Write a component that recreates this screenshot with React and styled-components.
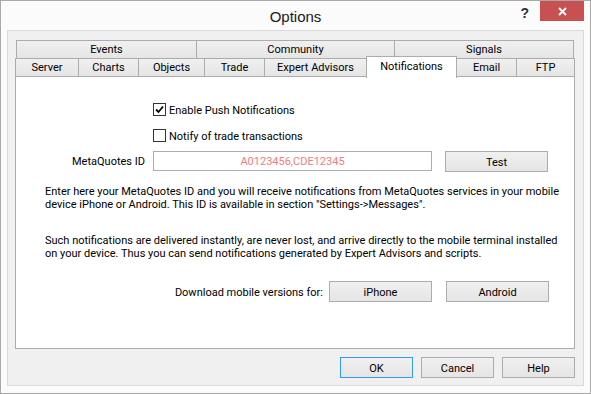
import React from 'react';
import styled, { createGlobalStyle } from 'styled-components';

const FONT = 'Roboto, "Liberation Sans", Arial, sans-serif';
const TITLE_FONT = '"Liberation Sans", Arial, sans-serif';

const GlobalStyle = createGlobalStyle`
  html, body {
    margin: 0;
    padding: 0;
    background: #ffffff;
  }
  * {
    box-sizing: border-box;
  }
`;

const Window = styled.div`
  width: 591px;
  height: 394px;
  border: 1px solid #a9a9a9;
  background: #fbfbfb;
  font-family: ${FONT};
  font-size: 11px;
  color: #000;
  display: flex;
  flex-direction: column;
`;

const TitleBar = styled.div`
  height: 29px;
  display: grid;
  grid-template-columns: 1fr auto 1fr;
  align-items: start;
`;

const Title = styled.div`
  grid-column: 2;
  font-family: ${TITLE_FONT};
  font-size: 15px;
  line-height: 15px;
  padding-top: 8px;
  color: #1a1a1a;
`;

const Controls = styled.div`
  grid-column: 3;
  display: flex;
  justify-content: flex-end;
  align-items: flex-start;
  padding-right: 6px;
`;

const HelpGlyph = styled.div`
  font-family: ${TITLE_FONT};
  font-size: 14px;
  font-weight: bold;
  line-height: 14px;
  padding-top: 5px;
  color: #333;
  margin-right: 11px;
`;

const CloseButton = styled.div`
  width: 44px;
  height: 20px;
  background: #c75050;
  display: flex;
  align-items: center;
  justify-content: center;
`;

const Client = styled.div`
  flex: 1;
  margin: 0 6px 7px 6px;
  border: 1px solid #dadada;
  background: #f0f0f0;
  padding: 9px 8px 7px 7px;
  display: flex;
  flex-direction: column;
`;

const TabRow = styled.div`
  display: flex;
  padding-left: ${(p) => p.$indent || 0}px;
  margin-top: ${(p) => (p.$overlap ? -1 : 0)}px;
  height: 19px;
  align-items: flex-start;
`;

const Tab = styled.div`
  width: ${(p) => p.$w}px;
  height: 19px;
  margin-left: -1px;
  padding-top: 1px;
  border: 1px solid #acacac;
  background: linear-gradient(#f0f0f0, #e5e5e5);
  display: flex;
  align-items: center;
  justify-content: center;
  line-height: 14px;
  &:first-child {
    margin-left: 0;
  }
`;

const ActiveTab = styled(Tab)`
  position: relative;
  z-index: 1;
  height: 22px;
  margin-top: -2px;
  border-bottom: none;
  background: #ffffff;
  align-items: flex-start;
  padding-top: 3px;
`;

const Panel = styled.div`
  margin-top: -1px;
  height: 273px;
  width: 560px;
  border: 1px solid #acacac;
  background: #ffffff;
  display: flex;
  flex-direction: column;
  padding-top: 26px;
`;

const CheckRow = styled.label`
  display: flex;
  align-items: center;
  gap: 3px;
  height: 13px;
  padding-left: 137px;
  margin-top: ${(p) => p.$top || 0}px;
`;

const Box = styled.span`
  width: 13px;
  height: 13px;
  border: 1px solid #333333;
  background: #ffffff;
  display: flex;
  align-items: center;
  justify-content: center;
`;

const BoxText = styled.span`
  padding-top: 1px;
`;

const FieldRow = styled.div`
  display: flex;
  align-items: center;
  height: 21px;
  margin-top: ${(p) => p.$top || 0}px;
`;

const FieldLabel = styled.div`
  width: 129px;
  text-align: right;
  margin-right: 8px;
`;

const IdInput = styled.div`
  width: 279px;
  height: 20px;
  border: 1px solid #abadb3;
  background: #ffffff;
  color: #f47c7c;
  display: flex;
  align-items: center;
  justify-content: center;
  align-self: flex-start;
`;

const Button = styled.div`
  width: ${(p) => p.$w || 103}px;
  height: 21px;
  margin-left: ${(p) => p.$gap || 0}px;
  padding-top: 1px;
  border: 1px solid ${(p) => (p.$default ? '#3399ff' : '#acacac')};
  background: linear-gradient(#f0f0f0, #e5e5e5);
  display: flex;
  align-items: center;
  justify-content: center;
`;

const Paragraph = styled.p`
  margin: ${(p) => p.$top || 0}px 0 0 0;
  padding-left: 29px;
  line-height: 13px;
  white-space: nowrap;
`;

const DownloadRow = styled.div`
  display: flex;
  align-items: center;
  justify-content: flex-end;
  padding-right: 25px;
  height: 21px;
  margin-top: ${(p) => p.$top || 0}px;
`;

const DownloadLabel = styled.div`
  margin-right: 6px;
  padding-top: 1px;
`;

const Footer = styled.div`
  display: flex;
  justify-content: flex-end;
  gap: 8px;
  margin-top: 8px;
`;

const CheckMark = () => (
  <svg width="9" height="9" viewBox="0 0 9 9">
    <path d="M1 4.5 L3.5 7 L8 1.5" fill="none" stroke="#000" strokeWidth="1.8" />
  </svg>
);

const CloseIcon = () => (
  <svg width="9" height="9" viewBox="0 0 9 9">
    <path d="M1 1 L8 8 M8 1 L1 8" stroke="#fff" strokeWidth="1.8" />
  </svg>
);

const backTabs = [
  { label: 'Events', w: 181 },
  { label: 'Community', w: 199 },
  { label: 'Signals', w: 180 },
];

const frontTabs = [
  { label: 'Server', w: 64 },
  { label: 'Charts', w: 61 },
  { label: 'Objects', w: 67 },
  { label: 'Trade', w: 61 },
  { label: 'Expert Advisors', w: 103 },
  { label: 'Notifications', w: 91, active: true },
  { label: 'Email', w: 61 },
  { label: 'FTP', w: 59 },
];

export default function App() {
  return (
    <>
      <GlobalStyle />
      <Window>
        <TitleBar>
          <Title>Options</Title>
          <Controls>
            <HelpGlyph>?</HelpGlyph>
            <CloseButton>
              <CloseIcon />
            </CloseButton>
          </Controls>
        </TitleBar>
        <Client>
          <TabRow $indent={1}>
            {backTabs.map((t) => (
              <Tab key={t.label} $w={t.w}>
                {t.label}
              </Tab>
            ))}
          </TabRow>
          <TabRow $overlap>
            {frontTabs.map((t) =>
              t.active ? (
                <ActiveTab key={t.label} $w={t.w}>
                  {t.label}
                </ActiveTab>
              ) : (
                <Tab key={t.label} $w={t.w}>
                  {t.label}
                </Tab>
              )
            )}
          </TabRow>
          <Panel>
            <CheckRow>
              <Box>
                <CheckMark />
              </Box>
              <BoxText>Enable Push Notifications</BoxText>
            </CheckRow>
            <CheckRow $top={13}>
              <Box />
              <BoxText>Notify of trade transactions</BoxText>
            </CheckRow>
            <FieldRow $top={9}>
              <FieldLabel>MetaQuotes ID</FieldLabel>
              <IdInput>A0123456,CDE12345</IdInput>
              <Button $gap={13}>Test</Button>
            </FieldRow>
            <Paragraph $top={13}>
              Enter here your MetaQuotes ID and you will receive notifications from MetaQuotes services in your mobile
              <br />
              device iPhone or Android. This ID is available in section "Settings-&gt;Messages".
            </Paragraph>
            <Paragraph $top={23}>
              Such notifications are delivered instantly, are never lost, and arrive directly to the mobile terminal installed
              <br />
              on your device. Thus you can send notifications generated by Expert Advisors and scripts.
            </Paragraph>
            <DownloadRow $top={21}>
              <DownloadLabel>Download mobile versions for:</DownloadLabel>
              <Button>iPhone</Button>
              <Button $gap={14}>Android</Button>
            </DownloadRow>
          </Panel>
          <Footer>
            <Button $w={73} $default>
              OK
            </Button>
            <Button $w={73}>Cancel</Button>
            <Button $w={73}>Help</Button>
          </Footer>
        </Client>
      </Window>
    </>
  );
}
